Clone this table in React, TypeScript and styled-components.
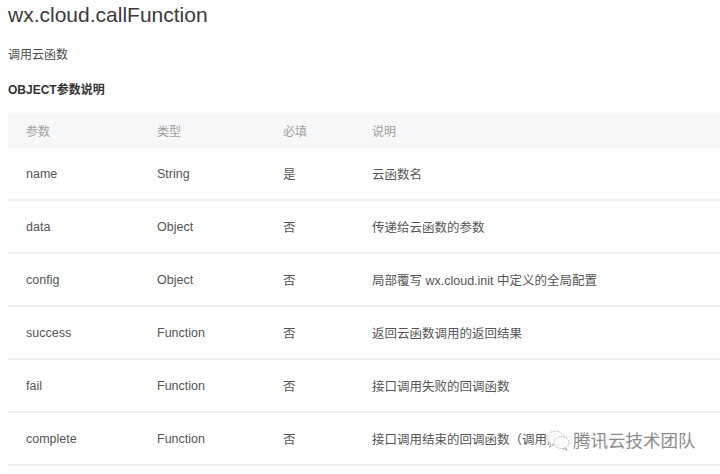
import styled, { createGlobalStyle } from 'styled-components';

const GlobalStyle = createGlobalStyle`
  body {
    margin: 0;
    background: #ffffff;
    font-family: 'Liberation Sans', 'Noto Sans CJK SC', sans-serif;
    color: #333;
  }
`;

interface Param {
  name: string;
  type: string;
  required: string;
  desc: string;
}

const params: Param[] = [
  { name: 'name', type: 'String', required: '是', desc: '云函数名' },
  { name: 'data', type: 'Object', required: '否', desc: '传递给云函数的参数' },
  { name: 'config', type: 'Object', required: '否', desc: '局部覆写 wx.cloud.init 中定义的全局配置' },
  { name: 'success', type: 'Function', required: '否', desc: '返回云函数调用的返回结果' },
  { name: 'fail', type: 'Function', required: '否', desc: '接口调用失败的回调函数' },
  { name: 'complete', type: 'Function', required: '否', desc: '接口调用结束的回调函数（调用成功、失败都会执行）' },
];

export default function App() {
  return (
    <>
      <GlobalStyle />
      <Page>
        <Title>wx.cloud.callFunction</Title>
        <Intro>调用云函数</Intro>
        <SectionTitle>OBJECT参数说明</SectionTitle>
        <Table>
          <HeadRow>
            <HeadCell>参数</HeadCell>
            <HeadCell>类型</HeadCell>
            <HeadCell>必填</HeadCell>
            <HeadCell>说明</HeadCell>
          </HeadRow>
          {params.map((p) => (
            <Row key={p.name}>
              <Cell>{p.name}</Cell>
              <Cell>{p.type}</Cell>
              <Cell>{p.required}</Cell>
              <Cell>{p.desc}</Cell>
            </Row>
          ))}
        </Table>
        <Watermark>
          <svg width="24" height="22" viewBox="0 0 24 22" fill="none">
            <ellipse cx="9.5" cy="8" rx="8.5" ry="6.8" stroke="#a8a8a8" strokeWidth="0.9" strokeDasharray="1.6 1.2" fill="rgba(255,255,255,0.85)" />
            <path d="M4.5 13.5 L3.5 17 L7.5 14.5" stroke="#a8a8a8" strokeWidth="0.9" fill="none" />
            <ellipse cx="15.5" cy="12.5" rx="7.5" ry="6" stroke="#a8a8a8" strokeWidth="0.9" strokeDasharray="1.6 1.2" fill="rgba(255,255,255,0.85)" />
            <path d="M19.5 17.5 L21 20.5 L17 18.3" stroke="#a8a8a8" strokeWidth="0.9" fill="none" />
          </svg>
          <WatermarkText>腾讯云技术团队</WatermarkText>
        </Watermark>
      </Page>
    </>
  );
}

const Page = styled.div`
  position: relative;
  padding: 0 0 0 8px;
  height: 474px;
  overflow: hidden;
`;

const Title = styled.h1`
  margin: 0;
  padding-top: 2px;
  font-size: 21px;
  font-weight: 300;
  line-height: 26px;
  color: #3a3a3a;
`;

const Intro = styled.p`
  margin: 18px 0 0;
  font-size: 12px;
  line-height: 18px;
  color: #4a4a4a;
`;

const SectionTitle = styled.h3`
  margin: 17px 0 0;
  font-size: 12px;
  font-weight: 700;
  line-height: 18px;
  color: #333;
`;

const Table = styled.div`
  margin-top: 14px;
  display: flex;
  flex-direction: column;
`;

const HeadRow = styled.div`
  display: grid;
  grid-template-columns: 131px 126px 89px 1fr;
  height: 35px;
  align-items: center;
  background: #f6f7f9;
`;

const Row = styled.div`
  display: grid;
  grid-template-columns: 131px 126px 89px 1fr;
  height: 51px;
  align-items: center;
  border-bottom: 2px solid #f0f0f2;
`;

const HeadCell = styled.div`
  padding-left: 18px;
  font-size: 12px;
  color: #a0a0a0;
`;

const Cell = styled.div`
  padding-left: 18px;
  font-size: 12.5px;
  color: #555;
  white-space: nowrap;
`;

const Watermark = styled.div`
  position: absolute;
  left: 546px;
  top: 430px;
  display: flex;
  align-items: center;
  padding-right: 20px;
  background: linear-gradient(to right, rgba(255, 255, 255, 0) 0, rgba(255, 255, 255, 0.92) 12px);
`;

const WatermarkText = styled.span`
  margin-left: 3px;
  font-size: 17.5px;
  line-height: 22px;
  color: #8c8c8c;
  letter-spacing: 0;
  text-shadow: 0 0 1px #fff, 0 0 2px #fff;
`;
